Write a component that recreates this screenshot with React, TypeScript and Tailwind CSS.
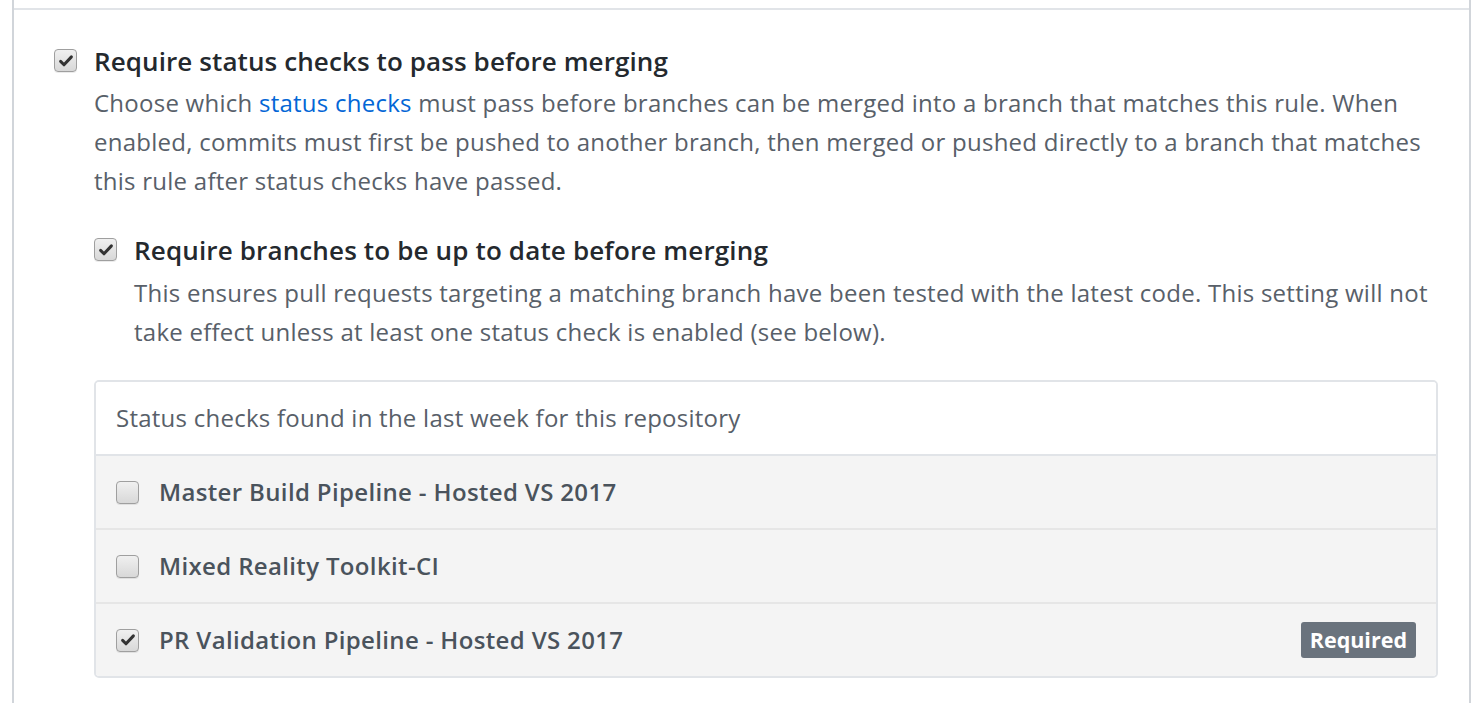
import React from 'react';

const font = { fontFamily: '"Open Sans", "Noto Sans", sans-serif' };

function Box({ checked }: { checked: boolean }) {
    return (
        <span className="flex h-[23px] w-[23px] shrink-0 items-center justify-center rounded-[4px] border border-[#9f9f9f] bg-gradient-to-b from-[#f0f0f0] to-[#d8d8d8] shadow-[0_1px_0_rgba(0,0,0,0.08)]">
            {checked && (
                <svg viewBox="0 0 16 16" className="h-[16px] w-[16px]">
                    <path d="M2.6 8.4 L6 11.8 L13.4 3.9" fill="none" stroke="#333" strokeWidth="3" strokeLinecap="round" strokeLinejoin="round" />
                </svg>
            )}
        </span>
    );
}

const checks = [
    { name: 'Master Build Pipeline - Hosted VS 2017', on: false },
    { name: 'Mixed Reality Toolkit-CI', on: false },
    { name: 'PR Validation Pipeline - Hosted VS 2017', on: true },
];

export default function App() {
    return (
        <div className="h-[703px] overflow-hidden bg-white" style={font}>
            <div className="ml-3 h-full w-[1459px] border-x-2 border-[#d1d5da]">
                <div className="h-[10px] border-b-2 border-[#e1e4e8]" />

                <div className="pl-[40px] pr-[31px] pt-[39px]">
                    {/* main option */}
                    <div className="flex gap-[17px]">
                        <Box checked />
                        <div className="flex-1">
                            <div className="text-[26px] font-semibold leading-[24px] tracking-[0.1px] text-[#24292e]">
                                Require status checks to pass before merging
                            </div>
                            <p className="mt-[10px] text-[24px] leading-[39px] tracking-[0.25px] text-[#586069]">
                                Choose which <a className="text-[#0366d6]">status checks</a> must pass before branches can be merged into a branch that matches this rule. When enabled, commits must first be pushed to another branch, then merged or pushed directly to a branch that matches this rule after status checks have passed.
                            </p>

                            {/* nested option */}
                            <div className="mt-[38px] flex gap-[17px]">
                                <Box checked />
                                <div className="flex-1">
                                    <div className="text-[26px] font-semibold leading-[24px] tracking-[0.15px] text-[#24292e]">
                                        Require branches to be up to date before merging
                                    </div>
                                    <p className="mt-[11px] text-[24px] leading-[39px] tracking-[0.25px] text-[#586069]">
                                        This ensures pull requests targeting a matching branch have been tested with the latest code. This setting will not take effect unless at least one status check is enabled (see below).
                                    </p>
                                </div>
                            </div>

                            {/* status checks list */}
                            <div className="mt-[29px] overflow-hidden rounded-[5px] border-2 border-[#e1e4e8]">
                                <div className="flex h-[74px] items-center border-b-2 border-[#e1e4e8] bg-white px-[20px] text-[24px] tracking-[0.25px] text-[#586069]">
                                    Status checks found in the last week for this repository
                                </div>
                                {checks.map((c, i) => (
                                    <div
                                        key={c.name}
                                        className={`flex items-center gap-[20px] bg-[#f4f4f4] px-[20px] ${i < checks.length - 1 ? 'h-[74px] border-b-2 border-[#e6e6e6]' : 'h-[72px]'}`}
                                    >
                                        <Box checked={c.on} />
                                        <span className="flex-1 text-[24px] font-semibold tracking-[0.35px] text-[#4a535c]">{c.name}</span>
                                        {c.on && (
                                            <span className="rounded-[3px] bg-[#6a737d] px-[9px] text-[21.5px] font-bold leading-[36px] text-white">
                                                Required
                                            </span>
                                        )}
                                    </div>
                                ))}
                            </div>
                        </div>
                    </div>
                </div>
            </div>
        </div>
    );
}
